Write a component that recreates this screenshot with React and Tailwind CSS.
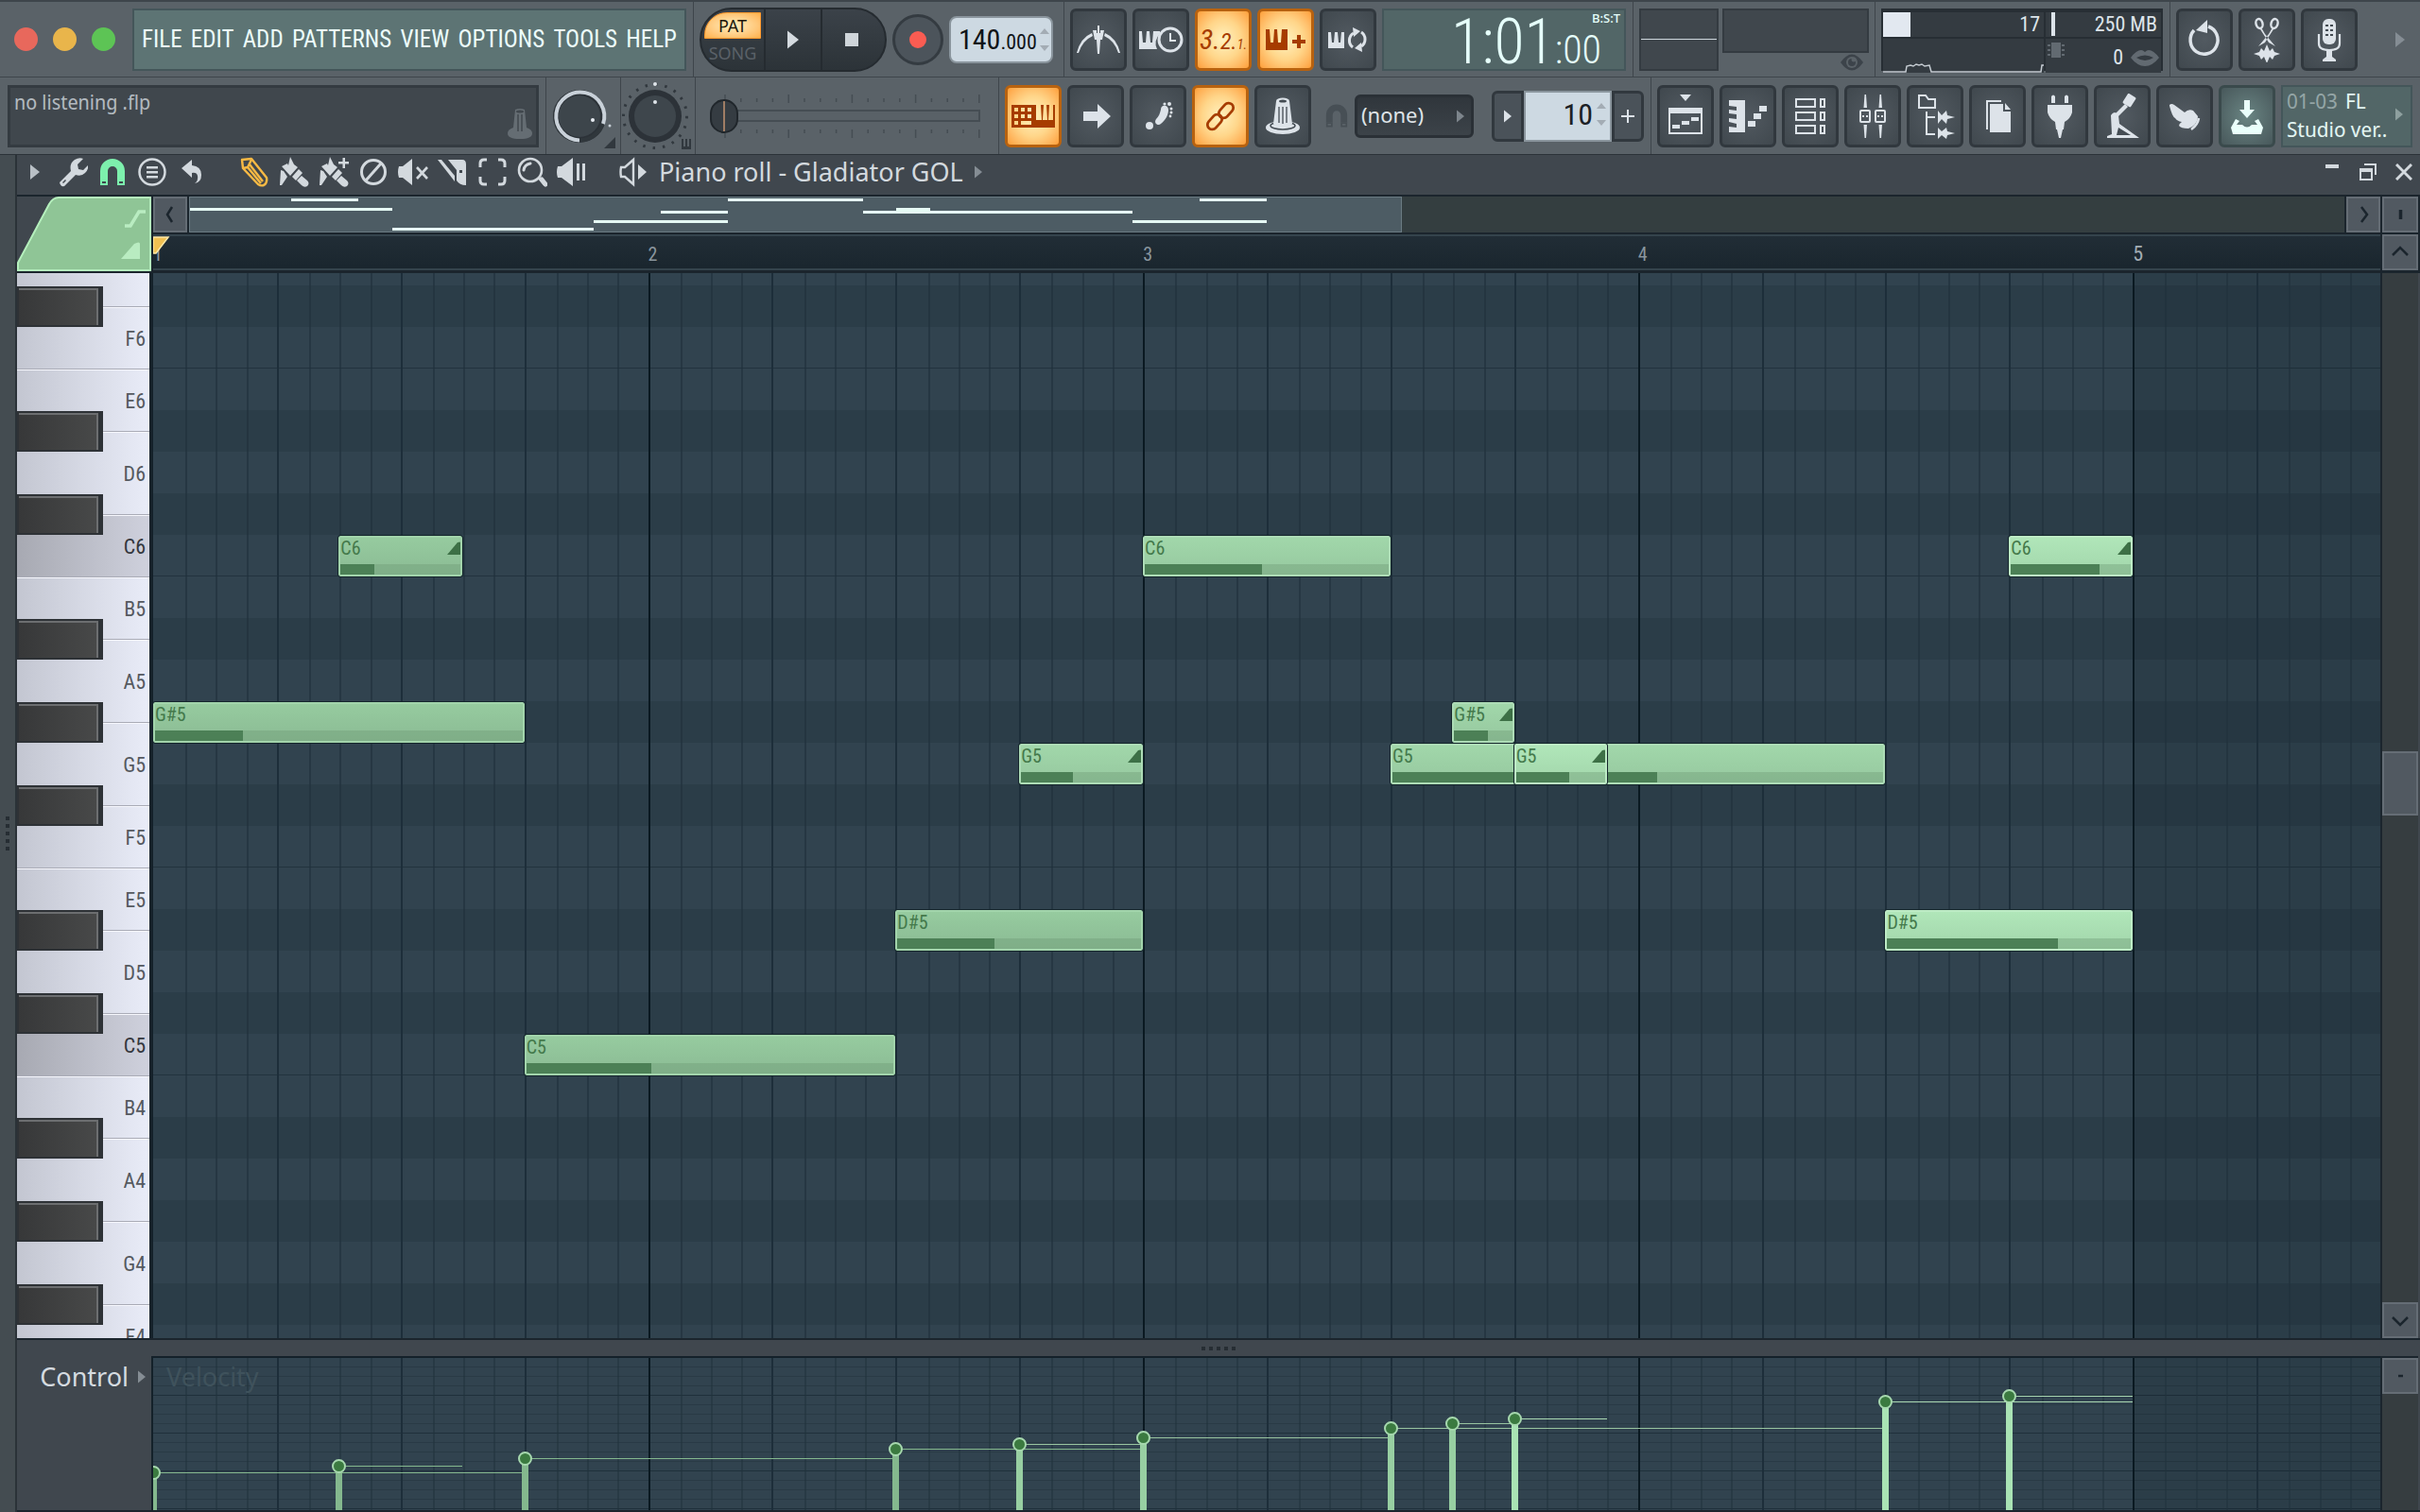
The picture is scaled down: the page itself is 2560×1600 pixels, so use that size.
import React from 'react';

const NOTES = [
  { id: 1, name: 'G#5', row: 11, start: 0, len: 12, vel: 24, y: 121, tone: 'low' },
  { id: 2, name: 'C6', row: 7, start: 6, len: 4, vel: 28, y: 114, tone: 'low', slide: true },
  { id: 3, name: 'C5', row: 19, start: 12, len: 12, vel: 34, y: 106, tone: 'low' },
  { id: 4, name: 'D#5', row: 16, start: 24, len: 8, vel: 40, y: 96, tone: 'low' },
  { id: 5, name: 'G5', row: 12, start: 28, len: 4, vel: 43, y: 91, tone: 'mid', slide: true },
  { id: 6, name: 'C6', row: 7, start: 32, len: 8, vel: 48, y: 84, tone: 'mid' },
  { id: 7, name: 'G5', row: 12, start: 40, len: 16, vel: 54, y: 74, tone: 'mid' },
  { id: 8, name: 'G#5', row: 11, start: 42, len: 2, vel: 58, y: 69, tone: 'mid', slide: true },
  { id: 9, name: 'G5', row: 12, start: 44, len: 3, vel: 60, y: 64, tone: 'high', slide: true },
  { id: 10, name: 'D#5', row: 16, start: 56, len: 8, vel: 70, y: 46, tone: 'high' },
  { id: 11, name: 'C6', row: 7, start: 60, len: 4, vel: 74, y: 40, tone: 'high', slide: true },
];

const STEPS = 72;
const ROW_H = 44;
const pct = (n) => `${(n / STEPS) * 100}%`;

const KEYS = ['G6', 'F6', 'E6', 'D6', 'C6', 'B5', 'A5', 'G5', 'F5', 'E5', 'D5', 'C5', 'B4', 'A4', 'G4', 'F4'];
const ROWS = [];
['G', 'F#', 'F', 'E', 'D#', 'D', 'C#', 'C', 'B', 'A#', 'A', 'G#', 'G', 'F#', 'F', 'E', 'D#', 'D', 'C#', 'C', 'B', 'A#', 'A', 'G#', 'G', 'F#', 'F'].forEach(
  (n, i) => ROWS.push({ id: i, name: n }),
);

const TONES = {
  low: 'bg-linear-to-b from-[#96cb9f] to-[#8bbb94] border-[#a2d4ab]',
  mid: 'bg-linear-to-b from-[#a1d7aa] to-[#96c89f] border-[#addcb6]',
  high: 'bg-linear-to-b from-[#b0e6b9] to-[#a2d6ab] border-[#bdebc5]',
};
const STEMS = {
  low: 'bg-[#84b88e]',
  mid: 'bg-[#98cfa2]',
  high: 'bg-[#a9e3b4]',
};
const LINES = {
  low: 'bg-[#84b88e]',
  mid: 'bg-[#98c4a0]',
  high: 'bg-[#a9d8b2]',
};

/* ---------- icons ---------- */

function Ic({ children, className = 'h-12 w-12' }) {
  return (
    <svg viewBox="0 0 48 48" className={`${className} shrink-0`} fill="currentColor" aria-hidden="true">
      {children}
    </svg>
  );
}

const stroke = { fill: 'none', stroke: 'currentColor', strokeWidth: 3 };

const PIANO = 'M1 13h4l1 14h3l1-14h3l1 14h3l1-14h6v22h-23z';

const icons = {
  metronome: (
    <Ic>
      <path d="M1 38Q5 22 17 17l1 3Q7 25 3 38zM47 38Q43 22 31 17l-1 3Q41 25 45 38z" />
      <path d="M18 14h4v3h1v-8h2v8h1v-3h4l-2 10h-2l-1 15h-2l-1-15h-2z" />
    </Ic>
  ),
  wait: (
    <Ic>
      <path d="M1 15h3l1 12h3l1-12h3l1 12h2l1-12h7v3a13 13 0 0 0-3 16H1z" />
      <circle cx="34" cy="24" r="12" {...stroke} />
      <path d="M34 17v8h6" {...stroke} strokeWidth="2" />
    </Ic>
  ),
  pianoPlus: (
    <Ic>
      <path d={PIANO} transform="translate(2 0)" />
      <path d="M31 24h5v-5h4v5h5v4h-5v5h-4v-5h-5z" />
    </Ic>
  ),
  loop: (
    <Ic>
      <path d="M3 16h3l1 11h2l1-11h3l1 11h2l1-11h3v17H3z" />
      <path d="M29 32a9 9 0 0 1 1-15M38 16a9 9 0 0 1 0 15" {...stroke} />
      <path d="M29 11l8 4-7 6zM39 37l-8-4 7-6z" />
    </Ic>
  ),
  typing: (
    <Ic>
      <path
        fillRule="evenodd"
        d="M1 12h46v24H1zM4 15v4h4v-4zM11 15v4h4v-4zM18 15v4h4v-4zM4 22v4h4v-4zM11 22v4h4v-4zM18 22v4h4v-4zM4 29v4h4v-4zM11 29v4h11v-4zM27 12v16h6l-1-16zM35 12l-1 16h5l-1-16zM41 12l-1 16h5V12z"
      />
    </Ic>
  ),
  arrow: (
    <Ic>
      <path d="M11 19h15v-8l14 13-14 13v-8H11z" />
    </Ic>
  ),
  foot: (
    <Ic>
      <circle cx="15" cy="34" r="4" />
      <path d="M22 27c3-3 4-6 5-10 0-6 8-5 8 0 0 6-3 11-8 15-3 3-8-1-5-5z" />
      <circle cx="31" cy="11" r="1.6" />
      <circle cx="36" cy="11" r="2" />
      <circle cx="38" cy="16" r="1.5" />
      <circle cx="38" cy="20" r="1.5" />
      <circle cx="37" cy="24" r="1.4" />
    </Ic>
  ),
  link: (
    <Ic>
      <g {...stroke} strokeWidth="2.800">
        <rect x="-5" y="-9" width="10" height="18" rx="5" transform="translate(30 18) rotate(42)" />
        <rect x="-5" y="-9" width="10" height="18" rx="5" transform="translate(18 30) rotate(42)" />
      </g>
    </Ic>
  ),
  knob: (
    <Ic>
      <ellipse cx="24" cy="36" rx="18" ry="7" />
      <ellipse cx="24" cy="34" rx="13" ry="4" fill="none" stroke="#444c53" strokeWidth="1.5" />
      <path d="M17 8h14l3 24q-10 5-20 0z" />
      <ellipse cx="24" cy="8" rx="7" ry="3.4" />
      <ellipse cx="24" cy="8" rx="4" ry="1.6" fill="#444c53" />
      <path d="M20 14v17M24 14v18M28 14v17" stroke="#444c53" strokeWidth="1.3" />
    </Ic>
  ),
  playlist: (
    <Ic>
      <path d="M18 1h12l-6 7z" />
      <path fillRule="evenodd" d="M6 15h36v28H6zM8 21v20h32V21z" />
      <path d="M10 33h8v4h-8zM20 29h8v4h-8zM30 25h8v4h-8z" />
    </Ic>
  ),
  pianoRoll: (
    <Ic>
      <path d="M4 7h17v34H4v-6l8 1v-4l-8-2v-4l8 1v-5l-8-1v-4l8 1v-4l-8-1z" />
      <path d="M24 29h8v6h-8zM30 21h8v6h-8zM36 13h8v6h-8z" />
    </Ic>
  ),
  rack: (
    <Ic>
      <g {...stroke} strokeWidth="2">
        <path d="M9 6h20v8H9zM9 20h20v8H9zM9 34h20v8H9zM35 6h4v8h-4zM35 20h4v8h-4zM35 34h4v8h-4z" />
      </g>
    </Ic>
  ),
  mixer: (
    <Ic>
      <g {...stroke} strokeWidth="2">
        <rect x="11" y="18" width="10" height="12" rx="1" />
        <rect x="27" y="18" width="10" height="12" rx="1" />
      </g>
      <path d="M13 23h2v2h-2zM17 23h2v2h-2zM29 23h2v2h-2zM33 23h2v2h-2zM15.500 1h1.500l1 14h-3.500zM31.500 1h1.500l1 14h-3.500zM14.500 33h3.500l-1 14h-1.500zM30.500 33h3.500l-1 14h-1.500z" />
    </Ic>
  ),
  browser: (
    <Ic>
      <path d="M7 2h7l3 4h7v9H7z" {...stroke} strokeWidth="2" />
      <path d="M15 19v24h9M15 25h9" {...stroke} strokeWidth="2" />
      <path d="M27 18l4 5 5-5 1 5 8 2-8 2-1 5-5-5-4 5v-14zM27 36l4 4 5-4 1 4 8 2-8 2-1 4-5-4-4 4z" />
    </Ic>
  ),
  copy: (
    <Ic>
      <path d="M28 8H13v30" {...stroke} strokeWidth="2" />
      <path d="M16 11h14v8h8v22H16zM32 10l6 7h-6z" />
    </Ic>
  ),
  plug: (
    <Ic>
      <path d="M15 3q2-3 4 0v7h-4zM29 3q2-3 4 0v7h-4zM11 12h26v8q-2 7-8 10l-1 8h-1l-2 9h-2l-2-9h-1l-1-8q-6-3-8-10z" />
    </Ic>
  ),
  hammer: (
    <Ic>
      <rect x="-5" y="-7" width="10" height="12" rx="1.500" transform="translate(31 8) rotate(32)" />
      <path d="M27 11l3 3-11 11-4-2z" />
      <path d="M12 23q4-6 8 0l1 9 21 15H8v-2l5-2z" />
      <path d="M20 36l13 8H18z" fill="#444c53" />
    </Ic>
  ),
  hand: (
    <Ic>
      <path d="M8 12q2-2 5 0l11 8q4-4 9-2l5 6q0 7-6 11l-4 2q-8 0-10-3 0-2 3-4-5-1-7-4-3-1-6-13z" />
      <path d="M39 26q-1 7-8 12" {...stroke} strokeWidth="2.500" />
    </Ic>
  ),
  download: (
    <Ic>
      <path d="M21 7h6v10h5l-8 9-8-9h5z" />
      <path d="M12 27l4 2-3 4h6q5 5 10 0h6l-3-4 4-2 5 9-2 7H9l-2-7z" />
    </Ic>
  ),
  reload: (
    <Ic>
      <path d="M13 14a14.500 15 0 1 0 15-4" fill="none" stroke="currentColor" strokeWidth="3.500" />
      <path d="M15 14L27 3v14z" />
      <path d="M17 14l9-4v5z" />
    </Ic>
  ),
  scissors: (
    <Ic>
      <g {...stroke} strokeWidth="2.400">
        <ellipse cx="16" cy="7" rx="3.500" ry="5" transform="rotate(-15 16 7)" />
        <ellipse cx="32" cy="7" rx="3.500" ry="5" transform="rotate(15 32 7)" />
      </g>
      <path d="M18 11l4 7 11 13-7-4-9-14zM30 11l-4 7-11 13 7-4 9-14z" />
      <path d="M24 29l3 7 3-3 2 4 6 2-6 2-2 4-3-3-3 7-3-7-3 3-2-4-6-2 6-2 2-4 3 3z" />
    </Ic>
  ),
  mic: (
    <Ic>
      <rect x="17" y="2" width="14" height="27" rx="6" />
      <path d="M20 9h3M20 14h3M20 19h3M25 9h3M25 14h3M25 19h3" stroke="#444c53" strokeWidth="2" />
      <path d="M13 18v10q0 7 11 7t11-7V18" {...stroke} strokeWidth="2.200" />
      <path d="M21 34h6v8l4 3v2H17v-2l4-3z" />
    </Ic>
  ),
};

function Magnet({ className }) {
  return (
    <svg viewBox="0 0 28 30" className={className} fill="currentColor" aria-hidden="true">
      <path d="M1 14a13 13 0 0 1 26 0v9h-8v-9a5 5 0 0 0-10 0v9H1z" />
      <path d="M2 24h6v4H2zM20 24h6v4h-6z" fill="none" stroke="currentColor" strokeWidth="2" />
    </svg>
  );
}

function Tri({ className = 'h-4 w-2.5' }) {
  return (
    <svg viewBox="0 0 10 16" className={`${className} shrink-0`} fill="currentColor" aria-hidden="true">
      <path d="M0 0l10 8-10 8z" />
    </svg>
  );
}

function Spin() {
  return (
    <svg viewBox="0 0 10 24" className="h-6 w-2.5 shrink-0 text-[#a3acb4]" fill="currentColor" aria-hidden="true">
      <path d="M0 6l5-6 5 6zM0 18l5 6 5-6z" />
    </svg>
  );
}

/* toolbar glyphs of the piano roll window */
const BRUSH =
  'M3 10l6-3 1 2 2-9 4 8 4 3-8 9zM14 21l7-8 4 4-7 8zM19 25l5-5 6 5q3 3 0 6-3 2-6-1zM2 14l3 1 4 6-6 9H1z';
const tools = [
  {
    label: 'Piano roll tools',
    art: (
      <path d="M2 27L14 15q-2-8 4-12 5-3 9-1l-6 6 1 5 5 1 5-5q1 4-3 8-4 4-10 2L7 31q-4 1-5-4zM5 27l1 1 3-3-1-1z" fillRule="evenodd" />
    ),
  },
  { label: 'Snap', magnet: true },
  {
    label: 'Menu',
    art: (
      <>
        <circle cx="16" cy="16" r="13.500" fill="none" stroke="currentColor" strokeWidth="2.500" />
        <path d="M10 10h12v2.500H10zM10 15h12v2.500H10zM10 20h12v2.500H10z" />
      </>
    ),
  },
  { label: 'Undo', art: <path d="M5 12L16 3v6q10 1 10 10 0 8-7 9 4-3 3-8-1-4-6-3v5z" /> },
  { gap: true, label: 'gap' },
  {
    label: 'Draw',
    color: 'text-[#f7b944]',
    art: (
      <g fill="none" stroke="currentColor" strokeWidth="2.400" strokeLinejoin="round">
        <path d="M3 3l10-1 16 20q1 6-3 8-3 1-6-1L4 12z" />
        <path d="M4 12l5-1 4-8M9 11l14 17M11 8l14 18" />
      </g>
    ),
  },
  { label: 'Paint', art: <path d={BRUSH} /> },
  {
    label: 'Paint add',
    art: (
      <>
        <path d={BRUSH} />
        <path d="M21 5h11v2.500H21z" />
        <path d="M25.500 1H28v11h-2.500z" />
      </>
    ),
  },
  {
    label: 'Delete',
    art: (
      <g fill="none" stroke="currentColor" strokeWidth="3">
        <circle cx="16" cy="16" r="12.500" />
        <path d="M8 25L24 7" />
      </g>
    ),
  },
  {
    label: 'Mute',
    art: (
      <>
        <path d="M1 10h4L15 2v28L5 22H1q-2-6 0-12z" />
        <path d="M20 11l11 12M31 11L20 23" stroke="currentColor" strokeWidth="2.600" />
      </>
    ),
  },
  {
    label: 'Slice',
    art: (
      <>
        <path fillRule="evenodd" d="M11 3h15q4 0 4 5v22q-7 0-10-5V14zM23 14v3h3v-3z" />
        <path d="M0 3h4l14 17v6z" />
      </>
    ),
  },
  {
    label: 'Select',
    art: (
      <path
        d="M10 3H7q-4 0-4 4v4M22 3h3q4 0 4 4v4M10 29H7q-4 0-4-4v-4M22 29h3q4 0 4-4v-4"
        fill="none"
        stroke="currentColor"
        strokeWidth="3"
      />
    ),
  },
  {
    label: 'Zoom',
    art: (
      <>
        <circle cx="14" cy="14" r="12" fill="none" stroke="currentColor" strokeWidth="2.600" />
        <path d="M7 14q1-6 7-7M24 23l5 6" fill="none" stroke="currentColor" strokeWidth="3" strokeLinecap="round" />
        <path d="M26 24l4 5" stroke="currentColor" strokeWidth="5" strokeLinecap="round" />
      </>
    ),
  },
  {
    label: 'Playback',
    art: <path d="M1 10h4L17 1v30L5 22H1q-2-6 0-12zM21 7h3v18h-3zM27 7h3v18h-3z" />,
  },
];

/* ---------- building blocks ---------- */

function ToolButton({ icon, label, on, green, children }) {
  const look = on
    ? 'border-[#b8620f] bg-radial from-[#fff2bf] via-[#ffd68a] to-[#ff9f38] text-[#a63c00]'
    : green
      ? 'border-[#3a4a4c] bg-radial from-[#6a8583] to-[#48585b] text-[#eafffb]'
      : 'border-[#31383e] bg-radial from-[#525a61] to-[#40484e] text-[#dde3e9]';
  return (
    <button
      type="button"
      aria-label={label}
      className={`flex h-[66px] w-[60px] shrink-0 items-center justify-center rounded-md border-3 ${look}`}
    >
      {children || icons[icon]}
    </button>
  );
}

function Sep() {
  return <div className="w-px shrink-0 self-stretch bg-[#3e454b]" />;
}

function ScrollButton({ label, d, className = 'w-[38px]' }) {
  return (
    <button
      type="button"
      aria-label={label}
      className={`flex h-[38px] shrink-0 items-center justify-center border-2 border-[#656d75] bg-[#515961] text-[#1b252d] ${className}`}
    >
      <svg viewBox="0 0 20 20" className="h-5 w-5" fill="none" stroke="currentColor" strokeWidth="2.500" aria-hidden="true">
        <path d={d} />
      </svg>
    </button>
  );
}

function TopRow() {
  const menu = ['FILE', 'EDIT', 'ADD', 'PATTERNS', 'VIEW', 'OPTIONS', 'TOOLS', 'HELP'];
  return (
    <div className="flex h-[82px] items-center border-t-2 border-b border-[#3e454b]">
      <div className="flex w-[140px] shrink-0 items-center gap-4 pl-[15px]">
        <button type="button" aria-label="Close application" className="h-[25px] w-[25px] rounded-full bg-[#e8685c]" />
        <button type="button" aria-label="Minimise application" className="h-[25px] w-[25px] rounded-full bg-[#e9b54b]" />
        <button type="button" aria-label="Maximise application" className="h-[25px] w-[25px] rounded-full bg-[#5dc455]" />
      </div>
      <nav className="flex h-[66px] w-[586px] shrink-0 items-center justify-between border-2 border-[#44565a] bg-[#5d7474] px-2 font-['Roboto_Condensed','Noto_Sans_Display',sans-serif] text-[25px] text-[#ecfdfb]">
        {menu.map((m) => (
          <button type="button" key={m}>
            {m}
          </button>
        ))}
      </nav>
      <div className="w-[7px] shrink-0" />
      <Sep />
      <div className="ml-1.5 flex h-[68px] w-[198px] shrink-0 overflow-hidden rounded-[34px] border-2 border-[#252b30] bg-linear-to-b from-[#3b4249] to-[#2c3338]">
        <button type="button" className="flex w-[66px] flex-col p-[3px] text-[18px]/[26px]" aria-label="Pattern or song mode">
          <span className="w-full rounded-tl-[24px] border border-[#ff9a2e] bg-radial from-[#fff0c0] to-[#ffb04a] text-center text-[#20180c]">
            PAT
          </span>
          <span className="mt-0.5 w-full text-center text-[#5a6168]">SONG</span>
        </button>
        <button type="button" aria-label="Play" className="flex w-[62px] items-center justify-center border-x-2 border-[#252b30] text-[#d5dbe0]">
          <Tri className="h-[22px] w-3" />
        </button>
        <button type="button" aria-label="Stop" className="flex flex-1 items-center justify-center">
          <span className="mr-1 h-3.5 w-3.5 bg-[#cfd5da]" />
        </button>
      </div>
      <button
        type="button"
        aria-label="Record"
        className="ml-1.5 flex h-[54px] w-[54px] shrink-0 items-center justify-center rounded-full border-3 border-[#343b41] bg-[#4c545b]"
      >
        <span className="h-[18px] w-[18px] rounded-full bg-[#fa5c52]" />
      </button>
      <div className="ml-1.5 flex h-[50px] w-[110px] shrink-0 items-center justify-between rounded-lg border-2 border-[#8a959d] bg-[#cdd9e2] pr-0.5 pl-2">
        <span className="font-['Roboto_Condensed','Noto_Sans_Display',sans-serif] text-[30px] text-[#101418]">
          140<span className="text-[22px]">.000</span>
        </span>
        <Spin />
      </div>
      <div className="w-[11px] shrink-0" />
      <Sep />
      <div className="ml-1.5 flex shrink-0 gap-1.5">
        <ToolButton icon="metronome" label="Metronome" />
        <ToolButton icon="wait" label="Wait for input" />
        <ToolButton label="Countdown" on>
          <span className="font-['Roboto_Condensed','Noto_Sans_Display',sans-serif] text-[30px] italic">
            3.<span className="text-[24px]">2.</span>
            <span className="text-[14px]">1.</span>
          </span>
        </ToolButton>
        <ToolButton icon="pianoPlus" label="Overdub" on />
        <ToolButton icon="loop" label="Loop record" />
      </div>
      <div className="ml-1.5 flex h-[66px] w-[258px] shrink-0 items-end justify-end border-2 border-[#44565a] bg-[#526667] font-['Roboto_Condensed','Noto_Sans_Display',sans-serif] text-[#e6fffb]">
        <div className="text-[66px]/[56px] font-light">1:01</div>
        <div className="flex flex-col self-stretch pr-1 text-[42px] font-light">
          <span className="text-right font-['Noto_Sans',sans-serif] text-[13px]/[16px] font-medium">B:S:T</span>
          <span className="mt-auto mr-5 leading-[40px]">:00</span>
        </div>
      </div>
      <div className="w-[7px] shrink-0" />
      <Sep />
      <div className="ml-1.5 flex h-[66px] w-[84px] shrink-0 items-center border-2 border-[#343b41] bg-[#40474d]">
        <div className="h-px w-full bg-[#cfd8de]" />
      </div>
      <div className="ml-1 flex h-[66px] w-[155px] shrink-0 flex-col items-end justify-between">
        <div className="h-[47px] w-full border-2 border-[#343b41] bg-[#40474d]" />
        <svg viewBox="0 0 24 18" className="mr-1.5 h-[18px] w-6" aria-hidden="true">
          <path d="M0 9q12-17 24 0-12 17-24 0z" fill="#3c434a" />
          <circle cx="12" cy="9" r="6" fill="#5a6268" />
          <circle cx="12" cy="9" r="4" fill="#3c434a" />
          <circle cx="14" cy="6" r="2.500" fill="#5a6268" />
        </svg>
      </div>
      <div className="w-[6px] shrink-0" />
      <Sep />
      <div className="ml-1.5 grid h-[66px] w-[298px] shrink-0 grid-cols-[170px_1fr] grid-rows-[26px_1fr] gap-0.5 border-2 border-t-4 border-b-0 border-[#272e34] bg-[#272e34] font-['Roboto_Condensed','Noto_Sans_Display',sans-serif] text-[22px]/[24px] text-[#dde4ea]">
        <div className="flex items-center justify-between bg-[#343b41] pr-1">
          <span className="h-[26px] w-[29px] bg-[#e2e8f0]" />
          17
        </div>
        <div className="flex items-center justify-between bg-[#343b41] pr-1 pl-1.5">
          <span className="h-[25px] w-1 bg-[#dde4ea]" />
          250 MB
        </div>
        <div className="flex items-end bg-[#343b41]">
          <svg viewBox="0 0 170 10" preserveAspectRatio="none" className="h-2.5 w-full" fill="none" stroke="#c5ccd2" strokeWidth="1.500" aria-hidden="true">
            <path d="M0 9h24l1-6 4-1 3 1 3-2 3 1 3-1 3 2 5-1 2 7h116l1-7h2" />
          </svg>
        </div>
        <div className="flex items-center gap-2 bg-[#343b41] pt-1 pr-0.5 pl-0.5">
          <svg viewBox="0 0 18 16" className="mb-4 h-4 w-[18px] text-[#626a71]" fill="currentColor" aria-hidden="true">
            <path d="M4 0h10v16H4zM0 2h3v2H0zM0 7h3v2H0zM0 12h3v2H0zM15 2h3v2h-3zM15 7h3v2h-3zM15 12h3v2h-3z" />
          </svg>
          <span className="flex-1 text-right">0</span>
          <svg viewBox="0 0 30 18" className="h-[18px] w-[30px] text-[#626a71]" fill="currentColor" aria-hidden="true">
            <path fillRule="evenodd" d="M0 9q6-8 11-8 2 0 4 2 2-2 4-2 5 0 11 8-7 9-15 9T0 9zM6 9q9 6 18 0-9-5-18 0z" />
          </svg>
        </div>
      </div>
      <div className="w-[7px] shrink-0" />
      <Sep />
      <div className="ml-1.5 flex shrink-0 gap-1.5">
        <ToolButton icon="reload" label="Undo" />
        <ToolButton icon="scissors" label="Edison" />
        <ToolButton icon="mic" label="Record audio" />
      </div>
      <div className="flex flex-1 justify-end pr-4 text-[#858d94]">
        <button type="button" aria-label="More">
          <Tri />
        </button>
      </div>
    </div>
  );
}

function Knob({ main }) {
  if (main) {
    return (
      <svg viewBox="0 0 78 76" className="h-[76px] w-[78px] shrink-0" role="img" aria-label="Main volume">
        <circle cx="35" cy="38" r="28" fill="#2c3238" />
        <circle cx="35" cy="38" r="25.500" fill="none" stroke="#30373c" strokeWidth="4" />
        <path d="M35 63.500A25.500 25.500 0 1 1 60 46" fill="none" stroke="#c9d1d9" strokeWidth="4" />
        <circle cx="35" cy="38" r="22" fill="#3d454b" />
        <circle cx="49" cy="42" r="2" fill="#e8edf2" />
        <circle cx="67" cy="48" r="1.500" fill="#c9d1d9" />
        <path d="M73 60v12H61z" fill="#31383e" />
      </svg>
    );
  }
  return (
    <svg viewBox="0 0 78 76" className="h-[76px] w-[78px] shrink-0" role="img" aria-label="Main pitch">
      <circle cx="36" cy="38" r="33.500" fill="none" stroke="#31383e" strokeWidth="3" strokeDasharray="2.500 8" />
      <circle cx="36" cy="38" r="28" fill="#2c3238" />
      <circle cx="36" cy="38" r="22" fill="#3e464c" />
      <circle cx="36" cy="23" r="2" fill="#dfe5ea" />
      <circle cx="36" cy="4" r="2" fill="#dfe5ea" />
      <path d="M64 62h2v8h2v-8h2v8h2v-8h2v11H64z" fill="#31383e" />
    </svg>
  );
}

function SecondRow() {
  return (
    <div className="flex h-[82px] items-center border-b border-[#2b3238]">
      <div className="ml-2 flex h-[66px] w-[562px] shrink-0 justify-between border-3 border-[#343b41] bg-[#40474d] pl-1 font-['Noto_Sans_Display','Noto_Sans',sans-serif] text-[21px]/[30px] text-[#b2b9bf]">
        <span>no listening .flp</span>
        <svg viewBox="0 0 26 32" className="mr-1 mb-1.5 h-8 w-[26px] self-end text-[#656d73]" aria-hidden="true">
          <path d="M8 1q5-2 10 0l2 19q6 2 6 6 0 6-13 6T0 26q0-4 6-6z" fill="currentColor" />
          <path d="M11 6v18M15 6v18" stroke="#40474d" strokeWidth="1.500" />
          <ellipse cx="13" cy="3" rx="4" ry="1.500" fill="#40474d" />
        </svg>
      </div>
      <div className="w-[7px] shrink-0" />
      <Sep />
      <Knob main />
      <Sep />
      <Knob />
      <Sep />
      <div className="relative ml-[15px] flex h-[66px] w-[288px] shrink-0 flex-col justify-center">
        <svg viewBox="0 0 288 50" className="h-[50px] w-full" stroke="#454d53" strokeWidth="1.500" aria-hidden="true">
          {Array.from({ length: 17 }, (_, i) => (
            <path key={i} d={`M${16 + i * 16.8} ${i % 4 ? 6 : 2}v${i % 4 ? 4 : 9}M${16 + i * 16.8} 39v${i % 4 ? 4 : 9}`} />
          ))}
          <rect x="14" y="19" width="271" height="11" fill="#596167" strokeWidth="2" />
        </svg>
        <input
          type="range"
          aria-label="Song position"
          defaultValue="0"
          className="absolute inset-0 h-full w-full appearance-none bg-transparent [&::-webkit-slider-thumb]:h-9 [&::-webkit-slider-thumb]:w-[30px] [&::-webkit-slider-thumb]:appearance-none [&::-webkit-slider-thumb]:rounded-full [&::-webkit-slider-thumb]:border-2 [&::-webkit-slider-thumb]:border-[#20262b] [&::-webkit-slider-thumb]:bg-linear-to-r [&::-webkit-slider-thumb]:from-[#353c42] [&::-webkit-slider-thumb]:from-45% [&::-webkit-slider-thumb]:via-[#e8a878] [&::-webkit-slider-thumb]:via-50% [&::-webkit-slider-thumb]:to-[#353c42] [&::-webkit-slider-thumb]:to-55%"
        />
      </div>
      <div className="w-[17px] shrink-0" />
      <Sep />
      <div className="ml-1.5 flex shrink-0 gap-1.5">
        <ToolButton icon="typing" label="Typing keyboard to piano" on />
        <ToolButton icon="arrow" label="Auto scroll" />
        <ToolButton icon="foot" label="Step edit" />
        <ToolButton icon="link" label="Multilink" on />
        <ToolButton icon="knob" label="MIDI controllers" />
      </div>
      <Magnet className="ml-[15px] h-[27px] w-6 shrink-0 text-[#474f55]" />
      <div className="relative ml-[7px] h-[46px] w-[126px] shrink-0 text-[#dfe4e8]">
        <select
          aria-label="Snap to grid"
          className="h-full w-full appearance-none rounded-md border-3 border-[#2a3036] bg-linear-to-b from-[#30363c] to-[#3c4349] pb-0.5 pl-1 font-['Noto_Sans',sans-serif] text-[22px]"
        >
          <option>(none)</option>
        </select>
        <span className="pointer-events-none absolute top-4 right-2.5 text-[#7d858c]">
          <Tri className="h-3.5 w-2" />
        </span>
      </div>
      <div className="ml-[19px] flex shrink-0 items-center">
        <button type="button" aria-label="Pattern list" className="flex h-[54px] w-[34px] items-center justify-center rounded-l-md border-3 border-[#31383e] bg-[#4a5259] text-[#dde3e9]">
          <Tri className="h-4 w-2" />
        </button>
        <div className="flex h-[54px] w-[93px] items-center justify-end gap-1 border-2 border-[#8a959d] bg-[#cdd9e2] pr-1 pb-1 font-['Roboto_Condensed','Noto_Sans_Display',sans-serif] text-[32px] text-[#1c2126]">
          10
          <Spin />
        </div>
        <button type="button" aria-label="Add pattern" className="flex h-[54px] w-[34px] items-center justify-center rounded-r-md border-3 border-[#31383e] bg-[#4a5259] text-[#dde3e9]">
          <svg viewBox="0 0 14 14" className="h-3.5 w-3.5" fill="currentColor" aria-hidden="true">
            <path d="M6 0h2v6h6v2H8v6H6V8H0V6h6z" />
          </svg>
        </button>
      </div>
      <div className="w-[7px] shrink-0" />
      <Sep />
      <div className="ml-1.5 flex shrink-0 gap-1.5">
        <ToolButton icon="playlist" label="Playlist" />
        <ToolButton icon="pianoRoll" label="Piano roll" />
        <ToolButton icon="rack" label="Channel rack" />
        <ToolButton icon="mixer" label="Mixer" />
        <ToolButton icon="browser" label="Browser" />
        <ToolButton icon="copy" label="Project picker" />
        <ToolButton icon="plug" label="Plugin picker" />
        <ToolButton icon="hammer" label="Tempo tapper" />
        <ToolButton icon="hand" label="Touch controllers" />
        <ToolButton icon="download" label="Content library" green />
      </div>
      <button
        type="button"
        className="mr-2 ml-1.5 flex h-[66px] flex-1 items-center justify-between border-2 border-[#44565a] bg-[#526667] pr-2 pb-1 pl-1 text-left font-['Noto_Sans_Display','Noto_Sans',sans-serif] text-[22px]/[30px] text-[#e2f5f2]"
      >
        <span className="whitespace-nowrap">
          <span className="mr-2 text-[#94a5a6]">01-03</span>FL
          <br />
          Studio ver..
        </span>
        <span className="-ml-2 text-[#8ea09f]">
          <Tri className="h-3.5 w-2" />
        </span>
      </button>
    </div>
  );
}

function WindowBar() {
  return (
    <div className="flex h-[42px] items-center pb-1.5 text-[#d3d9de]">
      <button type="button" aria-label="Options" className="ml-3.5 w-[29px] text-[#b9c0c6]">
        <Tri />
      </button>
      <div className="flex gap-2.5">
        {tools.map((t) =>
          t.gap ? (
            <div key={t.label} className="w-3.5" />
          ) : (
            <button type="button" key={t.label} aria-label={t.label} className={`h-8 w-8 ${t.color || ''}`}>
              {t.magnet ? (
                <Magnet className="mx-auto h-[30px] w-7 text-[#7df0ad]" />
              ) : (
                <svg viewBox="0 0 32 32" className="h-8 w-8" fill="currentColor" aria-hidden="true">
                  {t.art}
                </svg>
              )}
            </button>
          ),
        )}
      </div>
      <button type="button" className="ml-[34px] flex items-center font-['Noto_Sans',sans-serif] text-[27px]/[36px]">
        <svg viewBox="0 0 32 32" className="mr-2.5 h-8 w-8" aria-hidden="true">
          <path d="M2 11h4l9-8v26l-9-8H2q-1-5 0-10z" fill="none" stroke="currentColor" strokeWidth="2.400" />
          <path d="M20 8l9 8-9 8z" fill="currentColor" />
        </svg>
        Piano roll - Gladiator GOL
        <Tri className="ml-3 h-4 w-2 text-[#858d94]" />
      </button>
      <div className="mr-2 ml-auto flex items-center gap-5">
        <button type="button" aria-label="Minimise" className="h-5 w-[18px]">
          <span className="-mt-2 ml-1 block h-1 w-3.5 bg-current" />
        </button>
        <button type="button" aria-label="Restore" className="ml-0.5">
          <svg viewBox="0 0 18 18" className="h-[18px] w-[18px]" aria-hidden="true">
            <path d="M5 1h12v11M1 6h12v11H1z" fill="none" stroke="currentColor" strokeWidth="2" />
            <path d="M0 5h14v4H0z" fill="currentColor" />
          </svg>
        </button>
        <button type="button" aria-label="Close">
          <svg viewBox="0 0 18 18" className="h-[18px] w-[18px]" fill="none" stroke="currentColor" strokeWidth="3" aria-hidden="true">
            <path d="M1 1l16 16M17 1L1 17" />
          </svg>
        </button>
      </div>
    </div>
  );
}

const OVERVIEW_TOP = { 'C6': 1, 'G#5': 11, 'G5': 14, 'D#5': 24, 'C5': 32 };

function Overview() {
  return (
    <div className="flex h-[38px] gap-0.5">
      <ScrollButton label="Scroll left" d="M12 2L7 10l5 8" className="w-9" />
      <div className="flex min-w-0 flex-1 bg-[#343e40]">
        <div className="relative flex-9 border border-[#6a7a82] bg-[#4d5c64]">
          {NOTES.map((n) => (
            <span
              key={n.id}
              className="absolute h-[3px] bg-[#e6fbf5]"
              style={{ left: pct(n.start), width: pct(n.len), top: OVERVIEW_TOP[n.name] }}
            />
          ))}
        </div>
        <div className="flex-7" />
      </div>
      <ScrollButton label="Scroll right" d="M8 2l6 8-6 8" className="w-9" />
    </div>
  );
}

function Ruler() {
  const bars = [1, 2, 3, 4, 5];
  return (
    <div className="relative flex h-[38px] border-y-2 border-[#34434c] bg-linear-to-b from-[#212d36] to-[#1a262e] font-['Roboto_Condensed','Noto_Sans_Display',sans-serif] text-[20px]/[38px]">
      {bars.map((b) => (
        <span key={b} className={b === 5 ? 'flex-1 text-[22px] text-[#a3adb4]' : 'flex-2 text-[#8a969e]'}>
          {b}
        </span>
      ))}
      <svg viewBox="0 0 18 20" className="absolute top-0 left-0 h-5 w-[18px]" aria-hidden="true">
        <path d="M0 1h16L3 18H0z" fill="#f0c052" stroke="#ffe9a8" strokeWidth="1.500" />
      </svg>
    </div>
  );
}

function GridLines({ lane }) {
  return (
    <div className="pointer-events-none absolute inset-0 grid grid-cols-[repeat(18,minmax(0,1fr))]">
      {Array.from({ length: 18 }, (_, b) => (
        <div
          key={b}
          className={`grid grid-cols-4 border-l-2 ${b === 0 ? 'border-transparent' : b % 4 === 0 ? 'border-[#0a1921]' : 'border-[#1d2e3a]'} ${b >= 16 ? 'bg-[#0c1824]/15' : ''}`}
        >
          {[0, 1, 2, 3].map((s) => (
            <div key={s} className={s === 0 ? '' : lane ? 'border-l-2 border-[#1f313c]/50' : 'border-l-2 border-[#1f313c]/60'} />
          ))}
        </div>
      ))}
    </div>
  );
}

function Keyboard() {
  return (
    <div className="-mt-[52px] bg-[#c9cbd6]">
      {KEYS.map((k) => {
        const n = k[0];
        const tall = 'DGA'.includes(n);
        const sharp = !'CF'.includes(n);
        return (
          <button
            type="button"
            key={k}
            className={`relative flex w-full items-center justify-end border-b border-b-[#a9abb6] pt-0.5 pr-1 font-['Roboto_Condensed','Noto_Sans_Display',sans-serif] text-[22px] shadow-[inset_0_1px_0_#f6f7fd] ${tall ? 'h-[88px]' : 'h-[66px]'} ${n === 'C' ? 'bg-linear-to-r from-[#a7a9b2] to-[#cfd1dd] text-[#34373d]' : 'bg-linear-to-r from-[#c3c6d1] to-[#e9ecf8] text-[#55595f]'}`}
          >
            {k}
            {sharp && (
              <span className="absolute -bottom-[22px] left-0 z-10 h-[43px] w-[91px] border-2 border-r-[5px] border-[#2e3236] bg-linear-to-r from-[#373839] to-[#484949] shadow-[inset_-2px_2px_0_#6c6e70]" />
            )}
          </button>
        );
      })}
    </div>
  );
}

function NoteGrid() {
  return (
    <div className="relative h-full overflow-hidden bg-[#31434f]">
      <div className="relative -mt-[31px]">
        {ROWS.map((r) => (
          <div
            key={r.id}
            className={`h-11 ${r.name.includes('#') ? 'bg-[#2b3d48]' : 'bg-[#31434f]'} ${r.name === 'F' || r.name === 'C' ? 'border-b border-[#22333e]' : ''}`}
          />
        ))}
        <GridLines />
        {NOTES.map((n) => (
          <button
            type="button"
            key={n.id}
            aria-label={`Note ${n.name}`}
            className={`absolute flex h-[43px] flex-col justify-between overflow-hidden rounded-[2px] border-2 text-left outline-1 outline-[#15262c] ${TONES[n.tone]}`}
            style={{ left: pct(n.start), width: pct(n.len), top: n.row * ROW_H + 1 }}
          >
            <span className="flex w-full items-start justify-between font-['Roboto_Condensed','Noto_Sans_Display',sans-serif] text-[20px]/[23px] text-[#44794b]">
              {n.name}
              {n.slide && (
                <svg viewBox="0 0 14 14" className="mt-1 h-3.5 w-3.5 shrink-0" aria-hidden="true">
                  <path d="M0 14L11 1q3-1 3 0v13z" fill="#3d7046" />
                </svg>
              )}
            </span>
            <span className="block h-[11px] w-full bg-[#6d9a76]/40">
              <span className="block h-full bg-[#4c8056]" style={{ width: `${n.vel}%` }} />
            </span>
          </button>
        ))}
      </div>
    </div>
  );
}

function VelocityLane() {
  return (
    <div className="relative h-full overflow-hidden bg-[#31434f]">
      <div className="absolute inset-0 flex flex-col">
        {Array.from({ length: 17 }, (_, i) => (
          <div key={i} className={`h-2.5 shrink-0 border-b ${i % 4 === 3 ? 'border-[#1f303b]' : 'border-[#293a45]'}`} />
        ))}
      </div>
      <GridLines lane />
      <span className="absolute top-0.5 left-3.5 font-['Noto_Sans',sans-serif] text-[27px]/[36px] text-[#3f525c]">Velocity</span>
      {NOTES.map((n) => (
        <div key={n.id} className="absolute bottom-0" style={{ left: pct(n.start), width: pct(n.len), top: n.y }}>
          <span className={`absolute top-0 left-0 h-px w-full ${LINES[n.tone]}`} />
          <span className={`absolute top-0 -left-[3px] h-full w-[7px] ${STEMS[n.tone]}`} />
          <span className="absolute -top-[7px] -left-[7px] h-[15px] w-[15px] rounded-full border-2 border-[#a6d8ae] bg-[#3b7a40]" />
        </div>
      ))}
    </div>
  );
}

function Dots({ vertical }) {
  return (
    <span className={`flex gap-1 ${vertical ? 'flex-col' : ''}`}>
      {[0, 1, 2, 3, 4].map((i) => (
        <span key={i} className="h-1 w-1 bg-[#262d33]" />
      ))}
    </span>
  );
}

export default function App() {
  return (
    <div className="flex h-screen flex-col overflow-hidden bg-[#40474e] font-['Noto_Sans',sans-serif]">
      <header className="shrink-0 bg-[#5a6268]">
        <TopRow />
        <SecondRow />
      </header>
      <div className="flex min-h-0 flex-1">
        <aside className="flex w-[18px] shrink-0 items-center justify-center border-r-2 border-[#2b3238] bg-[#444c51]">
          <Dots vertical />
        </aside>
        <main className="flex min-w-0 flex-1 flex-col border-b-2 border-[#1b252d]">
          <WindowBar />
          <div className="flex shrink-0 border-t-2 border-[#1b252d] bg-[#1b252d]">
            <button type="button" aria-label="Channel colour" className="w-[142px] shrink-0 bg-[#40474e]">
              <svg viewBox="0 0 142 79" preserveAspectRatio="none" className="h-[79px] w-full" aria-hidden="true">
                <path d="M1 78V70L34 8Q38 1 44 1H141V78z" fill="#8fc596" stroke="#b5f0bd" strokeWidth="2" />
                <path d="M114 31h6l9-15h7" fill="none" stroke="#b9ecc1" strokeWidth="3.500" />
                <path d="M110 66l14-16q6-3 6 0v16z" fill="#b9ecc1" />
              </svg>
            </button>
            <div className="ml-0.5 flex min-w-0 flex-1 flex-col gap-0.5">
              <Overview />
              <Ruler />
            </div>
            <div className="mr-0.5 ml-0.5 flex flex-col gap-0.5">
              <ScrollButton label="Zoom horizontally" d="M10 5v10M11 5v10" />
              <ScrollButton label="Scroll up" d="M2 13l8-8 8 8" />
            </div>
          </div>
          <div className="flex min-h-0 flex-1 border-y-2 border-[#1b252d]">
            <div className="w-[142px] shrink-0 overflow-hidden border-r-2 border-[#1b252d]">
              <Keyboard />
            </div>
            <div className="min-w-0 flex-1 border-l-2 border-[#14212a]">
              <NoteGrid />
            </div>
            <div className="mr-0.5 flex w-10 shrink-0 flex-col border-l-2 border-[#1b252d] bg-[#363d40]">
              <div className="flex-505" />
              <div className="h-[68px] border-2 border-[#656d75] bg-[#515961]" />
              <div className="flex-515" />
              <ScrollButton label="Scroll down" d="M2 7l8 8 8-8" />
            </div>
          </div>
          <div className="flex h-[17px] shrink-0 items-center justify-center">
            <Dots />
          </div>
          <div className="flex h-[163px] shrink-0">
            <button
              type="button"
              className="flex w-[142px] shrink-0 items-start justify-end gap-2.5 pt-1 pr-1.5 font-['Noto_Sans',sans-serif] text-[27px]/[36px] text-[#d5dbe0]"
            >
              Control
              <Tri className="mt-2.5 h-4 w-2 text-[#858d94]" />
            </button>
            <div className="min-w-0 flex-1 border-t-2 border-l-2 border-[#14212a]">
              <VelocityLane />
            </div>
            <div className="mr-0.5 w-10 shrink-0 border-t-2 border-l-2 border-[#1b252d] bg-[#363d40]">
              <ScrollButton label="Zoom vertically" d="M8 10h5" />
            </div>
          </div>
        </main>
      </div>
    </div>
  );
}
